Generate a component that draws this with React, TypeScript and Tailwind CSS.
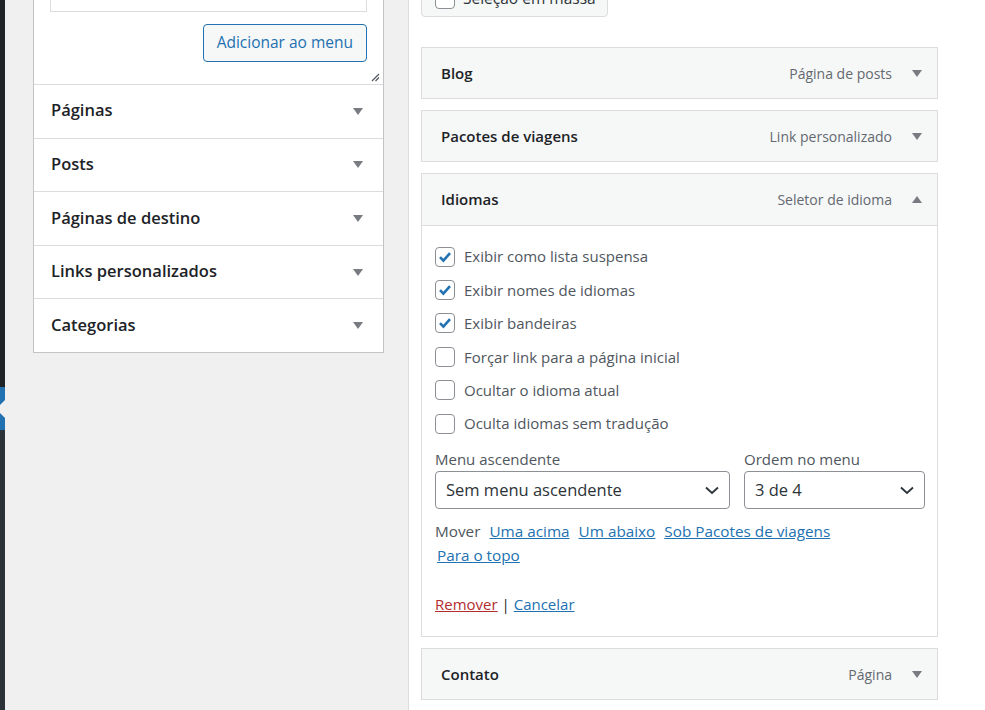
import { useState } from "react";

const font = { fontFamily: '"Open Sans", "Noto Sans", sans-serif' };

const Arrow = ({ up = false }: { up?: boolean }) => (
  <svg width="10" height="7" viewBox="0 0 10 7" className="shrink-0">
    {up ? <polygon points="0,7 10,7 5,0" fill="#787c82" /> : <polygon points="0,0 10,0 5,7" fill="#787c82" />}
  </svg>
);

const Chevron = () => (
  <svg width="14" height="9" viewBox="0 0 14 9" className="shrink-0">
    <path d="M1 1.5 L7 7 L13 1.5" fill="none" stroke="#2c3338" strokeWidth="1.8" />
  </svg>
);

const Checkbox = ({ checked }: { checked: boolean }) => (
  <span className="w-[20px] h-[20px] shrink-0 rounded-[4px] border border-[#8c8f94] bg-white flex items-center justify-center">
    {checked && (
      <svg width="16" height="16" viewBox="0 0 16 16">
        <path d="M3 8.2 L6.4 11.6 L13 4.2" fill="none" stroke="#2271b1" strokeWidth="2.6" strokeLinejoin="miter" />
      </svg>
    )}
  </span>
);

const leftSections = ["Páginas", "Posts", "Páginas de destino", "Links personalizados", "Categorias"];

const ItemHeader = ({ title, type, open = false }: { title: string; type: string; open?: boolean }) => (
  <div
    className={`flex items-center pl-[19px] pr-[15px] bg-[#f6f7f7] ${
      open ? "h-[52px] border-b border-[#dcdcde]" : "h-[50px]"
    }`}
  >
    <span className="font-semibold text-[15px] text-[#1d2327]">{title}</span>
    <span className="ml-auto text-[14px] text-[#646970] mr-[20px]">{type}</span>
    <Arrow up={open} />
  </div>
);

export default function App() {
  const [opts, setOpts] = useState([
    { label: "Exibir como lista suspensa", checked: true },
    { label: "Exibir nomes de idiomas", checked: true },
    { label: "Exibir bandeiras", checked: true },
    { label: "Forçar link para a página inicial", checked: false },
    { label: "Ocultar o idioma atual", checked: false },
    { label: "Oculta idiomas sem tradução", checked: false },
  ]);

  return (
    <div className="w-[985px] h-[710px] overflow-hidden flex bg-[#f0f0f1]" style={font}>
      {/* admin menu edge */}
      <div className="w-[5px] shrink-0 flex flex-col">
        <div className="h-[387px] bg-[#1d2327]" />
        <div className="h-[43px] bg-[#2271b1] relative">
          <svg width="5" height="43" viewBox="0 0 5 43" className="absolute left-0 top-0">
            <polygon points="6,12 6,32 -4,22" fill="#f0f0f1" />
          </svg>
        </div>
        <div className="flex-1 bg-[#2c3338]" />
      </div>

      {/* left column */}
      <div className="w-[403px] shrink-0 pl-[28px] pr-[24px]">
        <div className="bg-white border-x border-b border-[#c3c4c7]">
          <div className="px-[16px]">
            <div className="h-[12px] border-x border-b border-[#dcdcde]" />
            <div className="flex justify-end mt-[12px]">
              <button className="h-[38px] px-[13px] rounded-[4px] border border-[#2271b1] bg-[#f6f7f7] text-[#2271b1] text-[15.5px]">
                Adicionar ao menu
              </button>
            </div>
          </div>
          <div className="h-[22px] flex justify-end items-end pr-[3px] pb-[2px]">
            <svg width="9" height="9" viewBox="0 0 9 9">
              <path d="M1 8 L8 1 M4.5 8 L8 4.5" stroke="#50575e" strokeWidth="1.2" />
            </svg>
          </div>
          {leftSections.map((s) => (
            <div key={s} className="h-[53.6px] border-t border-[#dcdcde] flex items-center pl-[17px] pr-[20px]">
              <span className="text-[16.5px] font-semibold text-[#1d2327] -mt-[1px]">{s}</span>
              <span className="ml-auto">
                <Arrow />
              </span>
            </div>
          ))}
        </div>
      </div>

      {/* right column */}
      <div className="flex-1 bg-white border-l border-[#dcdcde] pl-[12px]">
        <div className="w-[517px]">
          <button className="mt-[-20px] h-[37px] w-[187px] flex items-center gap-[8px] pl-[13px] rounded-[4px] border border-[#dcdcde] bg-[#f6f7f7] text-[#2c3338] text-[15.5px]">
            <span className="w-[20px] h-[20px] rounded-[4px] border border-[#8c8f94] bg-white" />
            Seleção em massa
          </button>

          <div className="mt-[30px] border border-[#dcdcde]">
            <ItemHeader title="Blog" type="Página de posts" />
          </div>
          <div className="mt-[11px] border border-[#dcdcde]">
            <ItemHeader title="Pacotes de viagens" type="Link personalizado" />
          </div>
          <div className="mt-[11px] border border-[#dcdcde]">
            <ItemHeader title="Idiomas" type="Seletor de idioma" open />
            <div className="pl-[13px] pr-[12px] pt-[14px] pb-[20px] text-[#50575e]">
              <div className="flex flex-col">
                {opts.map((o, i) => (
                  <label
                    key={o.label}
                    className="h-[33.4px] flex items-center gap-[9px] cursor-pointer"
                    onClick={() => setOpts(opts.map((x, j) => (j === i ? { ...x, checked: !x.checked } : x)))}
                  >
                    <Checkbox checked={o.checked} />
                    <span className="text-[15px]">{o.label}</span>
                  </label>
                ))}
              </div>
              <div className="flex gap-[14px] mt-[9px]">
                <div className="w-[295px]">
                  <div className="text-[15px] leading-[20px]">Menu ascendente</div>
                  <div className="mt-[2px] h-[38px] rounded-[4px] border border-[#8c8f94] flex items-center pl-[10px] pr-[10px] text-[#2c3338] text-[16.5px]">
                    Sem menu ascendente
                    <span className="ml-auto">
                      <Chevron />
                    </span>
                  </div>
                </div>
                <div className="w-[181px]">
                  <div className="text-[15px] leading-[20px]">Ordem no menu</div>
                  <div className="mt-[2px] h-[38px] rounded-[4px] border border-[#8c8f94] flex items-center pl-[10px] pr-[10px] text-[#2c3338] text-[16.5px]">
                    3 de 4
                    <span className="ml-auto">
                      <Chevron />
                    </span>
                  </div>
                </div>
              </div>
              <div className="mt-[10px] text-[15.3px] leading-[24px]">
                <div className="flex gap-[9px]">
                  <span>Mover</span>
                  <a href="#" className="text-[#2271b1] underline">Uma acima</a>
                  <a href="#" className="text-[#2271b1] underline">Um abaixo</a>
                  <a href="#" className="text-[#2271b1] underline">Sob Pacotes de viagens</a>
                </div>
                <a href="#" className="ml-[2px] text-[#2271b1] underline">Para o topo</a>
              </div>
              <div className="mt-[25px] text-[15px] leading-[24px]">
                <a href="#" className="text-[#b32d2e] underline">Remover</a>
                <span className="text-[#1d2327]"> | </span>
                <a href="#" className="text-[#2271b1] underline">Cancelar</a>
              </div>
            </div>
          </div>
          <div className="mt-[11px] border border-[#dcdcde]">
            <ItemHeader title="Contato" type="Página" />
          </div>
        </div>
      </div>
    </div>
  );
}
